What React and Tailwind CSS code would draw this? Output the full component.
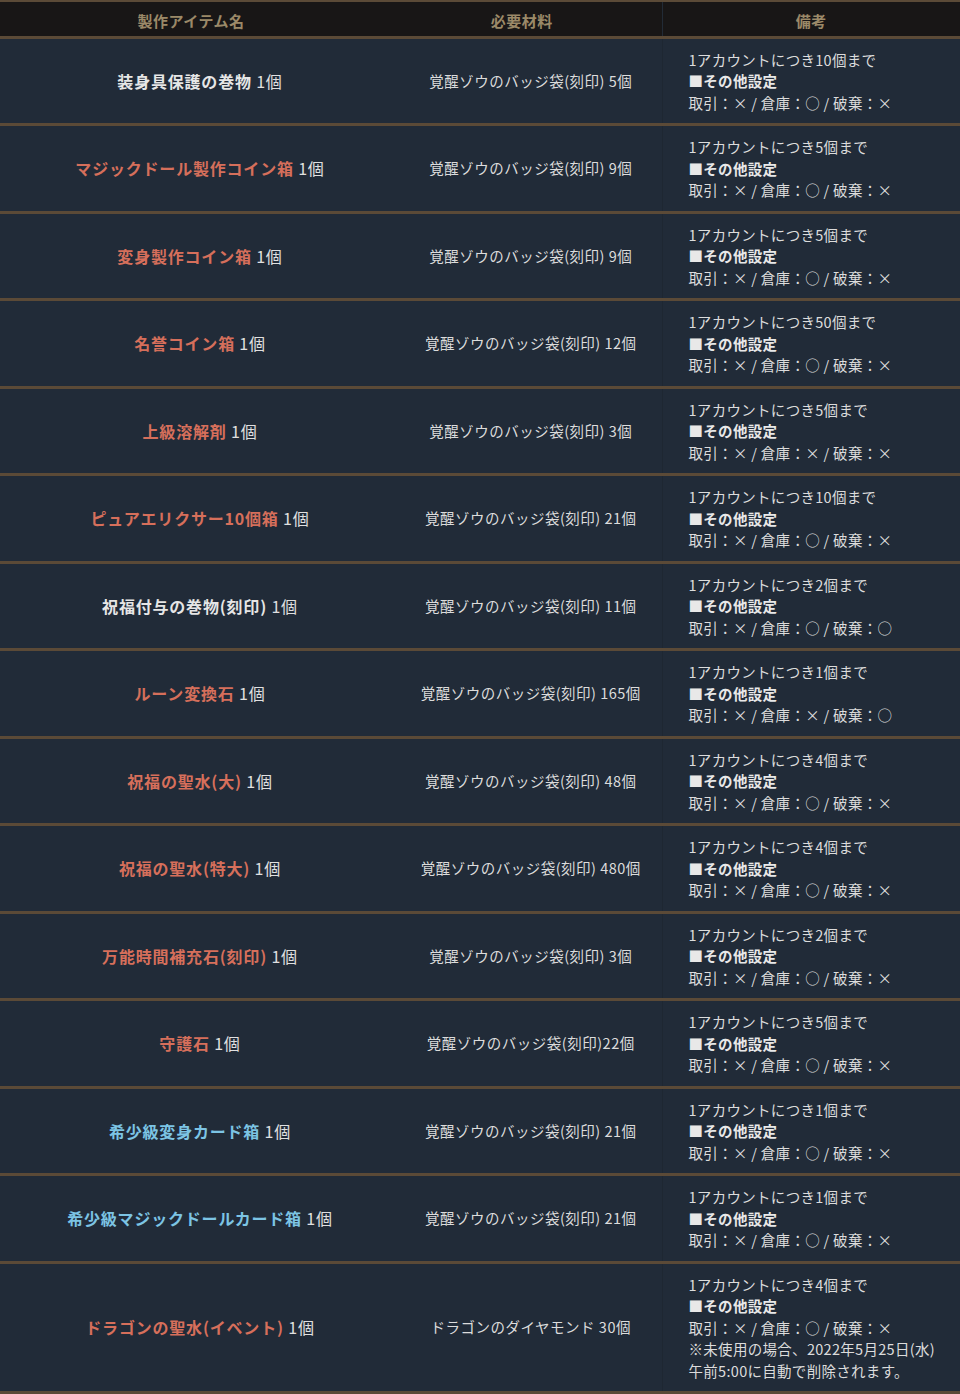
import React from "react";

const rows = [
  { name: "装身具保護の巻物", tone: "white", mat: "覚醒ゾウのバッジ袋(刻印) 5個", limit: "10", rule: ["×", "○", "×"] },
  { name: "マジックドール製作コイン箱", tone: "red", mat: "覚醒ゾウのバッジ袋(刻印) 9個", limit: "5", rule: ["×", "○", "×"] },
  { name: "変身製作コイン箱", tone: "red", mat: "覚醒ゾウのバッジ袋(刻印) 9個", limit: "5", rule: ["×", "○", "×"] },
  { name: "名誉コイン箱", tone: "red", mat: "覚醒ゾウのバッジ袋(刻印) 12個", limit: "50", rule: ["×", "○", "×"] },
  { name: "上級溶解剤", tone: "red", mat: "覚醒ゾウのバッジ袋(刻印) 3個", limit: "5", rule: ["×", "×", "×"] },
  { name: "ピュアエリクサー10個箱", tone: "red", mat: "覚醒ゾウのバッジ袋(刻印) 21個", limit: "10", rule: ["×", "○", "×"] },
  { name: "祝福付与の巻物(刻印)", tone: "white", mat: "覚醒ゾウのバッジ袋(刻印) 11個", limit: "2", rule: ["×", "○", "○"] },
  { name: "ルーン変換石", tone: "red", mat: "覚醒ゾウのバッジ袋(刻印) 165個", limit: "1", rule: ["×", "×", "○"] },
  { name: "祝福の聖水(大)", tone: "red", mat: "覚醒ゾウのバッジ袋(刻印) 48個", limit: "4", rule: ["×", "○", "×"] },
  { name: "祝福の聖水(特大)", tone: "red", mat: "覚醒ゾウのバッジ袋(刻印) 480個", limit: "4", rule: ["×", "○", "×"] },
  { name: "万能時間補充石(刻印)", tone: "red", mat: "覚醒ゾウのバッジ袋(刻印) 3個", limit: "2", rule: ["×", "○", "×"] },
  { name: "守護石", tone: "red", mat: "覚醒ゾウのバッジ袋(刻印)22個", limit: "5", rule: ["×", "○", "×"] },
  { name: "希少級変身カード箱", tone: "blue", mat: "覚醒ゾウのバッジ袋(刻印) 21個", limit: "1", rule: ["×", "○", "×"] },
  { name: "希少級マジックドールカード箱", tone: "blue", mat: "覚醒ゾウのバッジ袋(刻印) 21個", limit: "1", rule: ["×", "○", "×"] },
  {
    name: "ドラゴンの聖水(イベント)", tone: "red", mat: "ドラゴンのダイヤモンド 30個", limit: "4", rule: ["×", "○", "×"],
    extra: ["※未使用の場合、2022年5月25日(水)", "午前5:00に自動で削除されます。"],
  },
];

const toneClass = {
  white: "text-[#e6e6e6]",
  red: "text-[#d66f5b]",
  blue: "text-[#7cc4e4]",
};

export default function App() {
  return (
    <div className="w-[960px] bg-[#212b38] font-['Noto_Sans_CJK_JP','Noto_Sans',sans-serif]">
      <table className="w-full border-collapse table-fixed">
        <colgroup>
          <col className="w-[382px]" />
          <col className="w-[280px]" />
          <col />
        </colgroup>
        <thead>
          <tr className="bg-[#181616] border-t-2 border-b-[3px] border-[#5b4a37] h-[36px]">
            <th className="text-[15px] font-bold text-[#9b8968] leading-[20px] pt-[4px] tracking-[0.5px]">製作アイテム名</th>
            <th className="text-[15px] font-bold text-[#9b8968] leading-[20px] pt-[4px] tracking-[0.5px]">必要材料</th>
            <th className="text-[15px] font-bold text-[#9b8968] leading-[20px] pt-[4px] tracking-[0.5px] border-l border-[#222b36]">備考</th>
          </tr>
        </thead>
        <tbody>
          {rows.map((r, i) => (
            <tr key={i} className="border-b-[3px] border-[#5b4a37]">
              <td className="text-center align-middle text-[16px] leading-[22px] py-[10px] pl-[18px] tracking-[0.8px]">
                <span className={`font-bold ${toneClass[r.tone]}`}>{r.name}</span>
                <span className="text-[#e0e0e0]"> 1個</span>
              </td>
              <td className="text-center align-middle text-[14.5px] leading-[22px] text-[#dcdcdc] py-[10px] pl-[18px] tracking-[0.5px]">
                {r.mat}
              </td>
              <td className="align-middle text-[14.5px] leading-[21.5px] text-[#dcdcdc] pl-[26px] py-[10px] border-l border-[#1e2732] tracking-[0.3px]">
                <div>1アカウントにつき{r.limit}個まで</div>
                <div className="font-bold text-[#e8e8e8]">■その他設定</div>
                <div>
                  取引：{r.rule[0]} / 倉庫：{r.rule[1]} / 破棄：{r.rule[2]}
                </div>
                {r.extra && r.extra.map((t, j) => <div key={j}>{t}</div>)}
              </td>
            </tr>
          ))}
        </tbody>
      </table>
    </div>
  );
}
